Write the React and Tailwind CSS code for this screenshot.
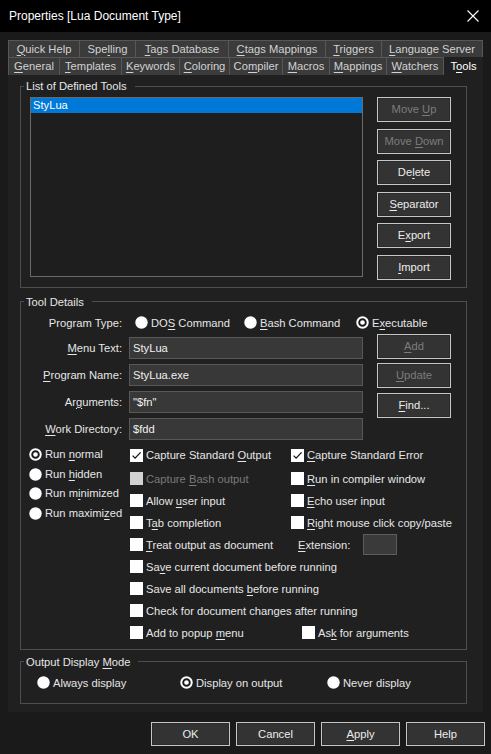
import React from "react";

const U = ({ children }) => <span className="underline underline-offset-[1.5px]">{children}</span>;

const Radio = ({ selected }) => (
    <svg width="13" height="13" viewBox="0 0 13 13" className="shrink-0">
        <circle cx="6.5" cy="6.5" r="6.2" fill="#ffffff" />
        {selected && <circle cx="6.5" cy="6.5" r="3.3" fill="none" stroke="#1a1a1a" strokeWidth="1.9" />}
    </svg>
);

const RadioItem = ({ selected, children, className = "" }) => (
    <div className={`flex items-center gap-[3px] ${className}`}>
        <Radio selected={selected} />
        <span className="text-[#e6e6e6] whitespace-nowrap">{children}</span>
    </div>
);

const CheckBox = ({ checked, disabled, children, className = "" }) => (
    <div className={`flex items-center gap-[3px] ${className}`}>
        <span className={`w-[13px] h-[13px] shrink-0 flex items-center justify-center ${disabled ? "bg-[#d2d2d2]" : "bg-white"}`}>
            {checked && (
                <svg width="13" height="13" viewBox="0 0 13 13">
                    <polyline points="2.6,6.6 5.1,9.1 10.6,3.4" fill="none" stroke="#111" strokeWidth="1.3" />
                </svg>
            )}
        </span>
        <span className={`whitespace-nowrap ${disabled ? "text-[#7a7a7a]" : "text-[#e6e6e6]"}`}>{children}</span>
    </div>
);

const Btn = ({ children, disabled, className = "" }) => (
    <div
        className={`flex items-center justify-center bg-[#333333] border border-[#c6c6c6] shadow-[inset_0_0_0_1px_#2b2b2b] ${disabled ? "text-[#7c7c7c]" : "text-[#ececec]"} ${className}`}
    >
        <span className="whitespace-nowrap">{children}</span>
    </div>
);

const Field = ({ value }) => (
    <div className="h-[22px] w-[234px] bg-[#383838] border border-[#585858] flex items-center pl-[3px] text-[#f0f0f0]">
        {value}
    </div>
);

const Group = ({ title, className = "", children }) => (
    <fieldset className={`border border-[#4e4e4e] ml-[12px] w-[447px] px-0 ${className}`}>
        <legend className="ml-[3px] pl-[2px] pr-[8px] leading-[14px] text-[#e6e6e6]">{title}</legend>
        {children}
    </fieldset>
);

const row1 = [
    ["w-[71px]", <><U>Q</U>uick Help</>],
    ["w-[56px]", <>Spe<U>l</U>ling</>],
    ["w-[93px]", <><U>T</U>ags Database</>],
    ["w-[97px]", <><U>C</U>tags Mappings</>],
    ["w-[56px]", <><U>T</U>riggers</>],
    ["w-[102px]", <><U>L</U>anguage Server</>],
];

const row2 = [
    ["w-[51px]", <><U>G</U>eneral</>],
    ["w-[62px]", <><U>T</U>emplates</>],
    ["w-[58px]", <><U>K</U>eywords</>],
    ["w-[50px]", <><U>C</U>oloring</>],
    ["w-[53px]", <>Co<U>m</U>piler</>],
    ["w-[47px]", <><U>M</U>acros</>],
    ["w-[57px]", <><U>M</U>appings</>],
    ["w-[57px]", <><U>W</U>atchers</>],
];

export default function App() {
    return (
        <div className="w-[491px] h-[754px] bg-[#1a1a1a] text-[11.2px] font-['Liberation_Sans',Arial,sans-serif] select-none overflow-hidden">
            {/* Title bar */}
            <div className="h-[32px] bg-black flex items-center justify-between pl-[9px] pr-[12px]">
                <span className="text-white text-[12px]">Properties [Lua Document Type]</span>
                <svg width="12" height="12" viewBox="0 0 12 12">
                    <path d="M0.5 0.5 L11.5 11.5 M11.5 0.5 L0.5 11.5" stroke="#ffffff" strokeWidth="1.1" />
                </svg>
            </div>

            {/* Tabs */}
            <div className="mt-[8px] ml-[8px] w-[475px]">
                <div className="flex h-[17px]">
                    {row1.map(([w, label], i) => (
                        <div key={i} className={`${w} h-full flex items-center justify-center bg-[#3b3b3b] border-t border-l border-[#575757] text-[#d2d2d2] ${i === row1.length - 1 ? "border-r" : ""}`}>
                            <span className="whitespace-nowrap">{label}</span>
                        </div>
                    ))}
                </div>
                <div className="flex h-[18px]">
                    {row2.map(([w, label], i) => (
                        <div key={i} className={`${w} h-full flex items-center justify-center bg-[#3b3b3b] border-t border-l border-[#575757] text-[#d2d2d2]`}>
                            <span className="whitespace-nowrap">{label}</span>
                        </div>
                    ))}
                    <div className="w-[40px] h-full flex items-center justify-center bg-[#202020] border-l border-[#575757] text-white">
                        <span>T<U>o</U>ols</span>
                    </div>
                </div>
            </div>

            {/* Panel */}
            <div className="ml-[8px] w-[475px] h-[637px] bg-[#202020] pt-[4px]">
                <Group title="List of Defined Tools">
                    <div className="flex pt-[4px] pb-[7px] pl-[9px]">
                        <div className="w-[333px] h-[180px] bg-[#1e1e1e] border border-[#6a6a6a]">
                            <div className="h-[15px] bg-[#0078d7] text-white flex items-center pl-[2px]">StyLua</div>
                        </div>
                        <div className="ml-[14px] flex flex-col gap-[6.6px]">
                            <Btn disabled className="w-[74px] h-[25px]">Move <U>U</U>p</Btn>
                            <Btn disabled className="w-[74px] h-[25px]">Move <U>D</U>own</Btn>
                            <Btn className="w-[74px] h-[25px]">De<U>l</U>ete</Btn>
                            <Btn className="w-[74px] h-[25px]"><U>S</U>eparator</Btn>
                            <Btn className="w-[74px] h-[25px]">E<U>x</U>port</Btn>
                            <Btn className="w-[74px] h-[25px]"><U>I</U>mport</Btn>
                        </div>
                    </div>
                </Group>

                <Group title="Tool Details" className="mt-[7px]">
                    <div className="pt-[6px] pb-[5px]">
                        {/* Program type */}
                        <div className="flex items-center h-[16px]">
                            <span className="w-[101px] text-right text-[#e6e6e6]">Program Type:</span>
                            <RadioItem className="ml-[13px] w-[109px]">DO<U>S</U> Command</RadioItem>
                            <RadioItem className="w-[112px]"><U>B</U>ash Command</RadioItem>
                            <RadioItem selected>E<U>x</U>ecutable</RadioItem>
                        </div>

                        {/* Text fields and buttons */}
                        <div className="flex mt-[3px]">
                            <div className="flex flex-col gap-[5px] pt-[3px]">
                                {[
                                    [<><U>M</U>enu Text:</>, "StyLua"],
                                    [<><U>P</U>rogram Name:</>, "StyLua.exe"],
                                    [<>Ar<U>g</U>uments:</>, "\"$fn\""],
                                    [<><U>W</U>ork Directory:</>, "$fdd"],
                                ].map(([label, value], i) => (
                                    <div key={i} className="flex items-center">
                                        <span className="w-[101px] text-right text-[#e6e6e6]">{label}</span>
                                        <div className="ml-[7px]"><Field value={value} /></div>
                                    </div>
                                ))}
                            </div>
                            <div className="ml-[14px] flex flex-col">
                                <Btn disabled className="w-[74px] h-[25px]"><U>A</U>dd</Btn>
                                <Btn disabled className="w-[74px] h-[25px] mt-[4px]"><U>U</U>pdate</Btn>
                                <Btn className="w-[74px] h-[25px] mt-[5px]"><U>F</U>ind...</Btn>
                            </div>
                        </div>

                        {/* Options */}
                        <div className="flex mt-[3px]">
                            <div className="w-[109px] pl-[8px] pt-[2px] flex flex-col">
                                <RadioItem selected className="h-[19.5px]">Run <U>n</U>ormal</RadioItem>
                                <RadioItem className="h-[19.5px]">Run <U>h</U>idden</RadioItem>
                                <RadioItem className="h-[19.5px]">Run m<U>i</U>nimized</RadioItem>
                                <RadioItem className="h-[19.5px]">Run maximi<U>z</U>ed</RadioItem>
                            </div>
                            <div className="flex flex-col">
                                <div className="flex h-[25px] items-center">
                                    <CheckBox checked className="w-[161px]">Capture Standard <U>O</U>utput</CheckBox>
                                    <CheckBox checked><U>C</U>apture Standard Error</CheckBox>
                                </div>
                                <div className="flex h-[22px] items-center">
                                    <CheckBox disabled className="w-[161px]">Capture <U>B</U>ash output</CheckBox>
                                    <CheckBox><U>R</U>un in compiler window</CheckBox>
                                </div>
                                <div className="flex h-[22px] items-center">
                                    <CheckBox className="w-[161px]">Allow <U>u</U>ser input</CheckBox>
                                    <CheckBox><U>E</U>cho user input</CheckBox>
                                </div>
                                <div className="flex h-[22px] items-center">
                                    <CheckBox className="w-[161px]">T<U>a</U>b completion</CheckBox>
                                    <CheckBox><U>R</U>ight mouse click copy/paste</CheckBox>
                                </div>
                                <div className="flex h-[22px] items-center">
                                    <CheckBox className="w-[161px]"><U>T</U>reat output as document</CheckBox>
                                    <span className="ml-[7px] w-[65px] text-[#e6e6e6]"><U>E</U>xtension:</span>
                                    <div className="w-[34px] h-[21px] bg-[#3a3a3a] border border-[#5c5c5c]" />
                                </div>
                                <div className="flex h-[22px] items-center">
                                    <CheckBox>Sa<U>v</U>e current document before running</CheckBox>
                                </div>
                                <div className="flex h-[22px] items-center">
                                    <CheckBox>Save all documents <U>b</U>efore running</CheckBox>
                                </div>
                                <div className="flex h-[22px] items-center">
                                    <CheckBox>Check for document changes after running</CheckBox>
                                </div>
                                <div className="flex h-[22px] items-center">
                                    <CheckBox className="w-[172px]">Add to popup <U>m</U>enu</CheckBox>
                                    <CheckBox>As<U>k</U> for arguments</CheckBox>
                                </div>
                            </div>
                        </div>
                    </div>
                </Group>

                <Group title={<>Output Display <U>M</U>ode</>} className="mt-[5px]">
                    <div className="flex items-center h-[16px] mt-[6px] mb-[12px] pl-[16px]">
                        <RadioItem className="w-[143px]">Always display</RadioItem>
                        <RadioItem selected className="w-[147px]">Display on output</RadioItem>
                        <RadioItem>Never display</RadioItem>
                    </div>
                </Group>
            </div>

            {/* Footer buttons */}
            <div className="flex justify-end gap-[6px] pr-[6px] mt-[10px]">
                <Btn className="w-[79px] h-[24px]">OK</Btn>
                <Btn className="w-[79px] h-[24px]">Cancel</Btn>
                <Btn className="w-[79px] h-[24px]"><U>A</U>pply</Btn>
                <Btn className="w-[79px] h-[24px]">Help</Btn>
            </div>
        </div>
    );
}
